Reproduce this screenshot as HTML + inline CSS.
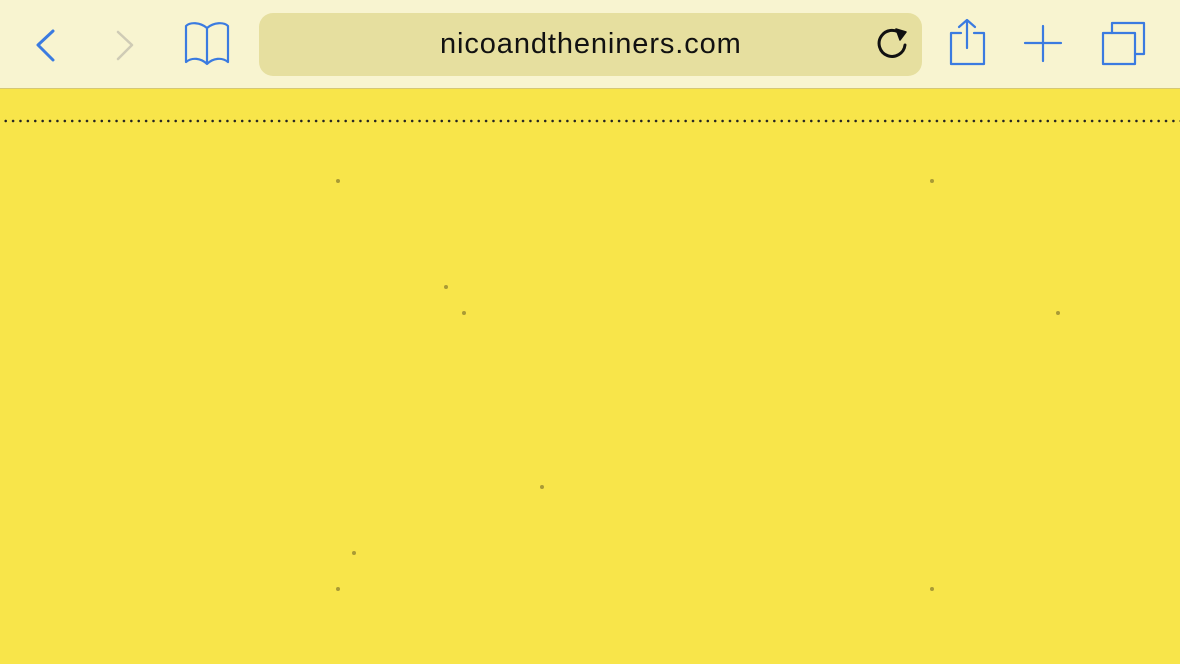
<!DOCTYPE html>
<html><head><style>
html,body{margin:0;padding:0;width:1180px;height:664px;overflow:hidden;background:#f8e44a;}
.bar{position:absolute;left:0;top:0;width:1180px;height:88px;background:#f8f4d0;border-bottom:1px solid #d6c873;}
.url{position:absolute;left:259px;top:13px;width:663px;height:63px;border-radius:14px;background:#e6df9f;}
.url span{position:absolute;left:181px;top:15px;font:29px "Liberation Sans",sans-serif;color:#111;letter-spacing:0.9px;}
.dots{position:absolute;left:0;top:119px;width:1180px;height:4px;background-image:radial-gradient(circle,#222 1.1px,transparent 1.5px);background-size:7.4px 4px;background-position:2px 0;}
svg{position:absolute;}
.page{position:absolute;top:89px;left:0;width:1180px;height:575px;background:#f8e54a;}
.page i{position:absolute;width:4px;height:4px;border-radius:50%;background:#a99b35;}
</style></head><body>
<div class="page">
<i style="left:336px;top:90px"></i><i style="left:930px;top:90px"></i><i style="left:462px;top:222px"></i><i style="left:1056px;top:222px"></i><i style="left:336px;top:498px"></i><i style="left:930px;top:498px"></i><i style="left:352px;top:462px"></i><i style="left:540px;top:396px"></i><i style="left:444px;top:196px"></i>
</div>
<div class="bar"></div>
<div class="url"><span>nicoandtheniners.com</span></div>
<div class="dots"></div>
<svg width="1180" height="88" style="left:0;top:0" fill="none" stroke-linecap="round" stroke-linejoin="round">
<path d="M53 31 L38 45 L53 60" stroke="#3b7be0" stroke-width="3"/>
<path d="M118 32 L132 45 L118 59" stroke="#cfcbb5" stroke-width="2.5"/>
<path d="M207 63 V28 C200 22 190 22 186 26 V62 C192 57 201 58 207 64 C213 58 222 57 228 62 V26 C224 22 214 22 207 28" stroke="#3b7be0" stroke-width="2.2"/>
<path d="M902 35 A13 13 0 1 0 905 45" stroke="#111" stroke-width="3"/>
<path d="M896 29 L906 32 L900 40 Z" fill="#111" stroke="#111" stroke-width="1.5"/>
<path d="M961 33 H951 V64 H984 V33 H974" stroke="#3b7be0" stroke-width="2.2"/>
<path d="M967 20 V48 M959 27 L967 20 L975 27" stroke="#3b7be0" stroke-width="2.2"/>
<path d="M1043 26 V61 M1025 43 H1061" stroke="#3b7be0" stroke-width="2.2"/>
<rect x="1103" y="33" width="32" height="31" stroke="#3b7be0" stroke-width="2.2"/>
<path d="M1112 33 V23 H1144 V54 H1135" stroke="#3b7be0" stroke-width="2.2"/>
</svg>
</body></html>
